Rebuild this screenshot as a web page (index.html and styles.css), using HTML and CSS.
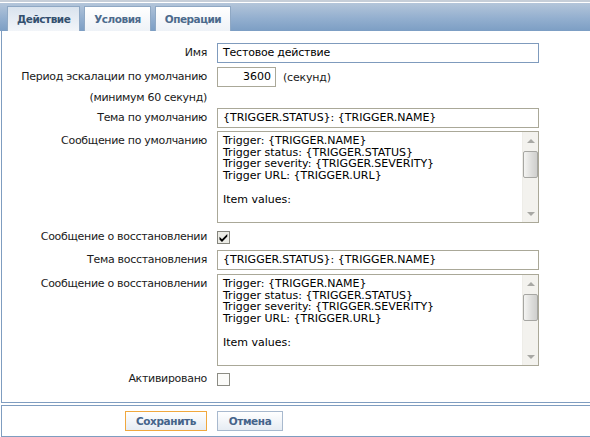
FILE: index.html
```html
<!DOCTYPE html>
<html>
<head>
<meta charset="utf-8">
<link rel="stylesheet" href="styles.css">
</head>
<body>
<div class="topline"></div>
<div class="tabbar">
  <div class="tab active">Действие</div>
  <div class="tab">Условия</div>
  <div class="tab">Операции</div>
</div>
<div class="panel">
  <div class="row r-name">
    <div class="lbl">Имя</div>
    <div class="field"><div class="input wide focus">Тестовое действие</div></div>
  </div>
  <div class="row r-period">
    <div class="lbl"><div>Период эскалации по умолчанию</div><div class="sub">(минимум 60 секунд)</div></div>
    <div class="field inline"><div class="input num">3600</div><span class="unit">(секунд)</span></div>
  </div>
  <div class="row r-subj">
    <div class="lbl">Тема по умолчанию</div>
    <div class="field"><div class="input wide">{TRIGGER.STATUS}: {TRIGGER.NAME}</div></div>
  </div>
  <div class="row r-msg">
    <div class="lbl">Сообщение по умолчанию</div>
    <div class="field">
      <div class="textarea">
        <div class="ta-text">Trigger: {TRIGGER.NAME}
Trigger status: {TRIGGER.STATUS}
Trigger severity: {TRIGGER.SEVERITY}
Trigger URL: {TRIGGER.URL}

Item values:</div>
        <div class="sb"><div class="sb-up"><span class="arr-up"></span></div><div class="sb-thumb"></div><div class="sb-fill"></div><div class="sb-down"><span class="arr-down"></span></div></div>
      </div>
    </div>
  </div>
  <div class="row r-check">
    <div class="lbl">Сообщение о восстановлении</div>
    <div class="field"><span class="check"><svg width="13" height="13" viewBox="0 0 13 13"><rect x="0.5" y="0.5" width="12" height="12" fill="#ecece6" stroke="#85857d"/><path d="M2.5 5.8 L5 8.3 L10.3 3 L10.3 5.6 L5 10.9 L2.5 8.4 Z" fill="#000"/></svg></span></div>
  </div>
  <div class="row r-rsubj">
    <div class="lbl">Тема восстановления</div>
    <div class="field"><div class="input wide">{TRIGGER.STATUS}: {TRIGGER.NAME}</div></div>
  </div>
  <div class="row r-rmsg">
    <div class="lbl">Сообщение о восстановлении</div>
    <div class="field">
      <div class="textarea">
        <div class="ta-text">Trigger: {TRIGGER.NAME}
Trigger status: {TRIGGER.STATUS}
Trigger severity: {TRIGGER.SEVERITY}
Trigger URL: {TRIGGER.URL}

Item values:</div>
        <div class="sb"><div class="sb-up"><span class="arr-up"></span></div><div class="sb-thumb"></div><div class="sb-fill"></div><div class="sb-down"><span class="arr-down"></span></div></div>
      </div>
    </div>
  </div>
  <div class="row r-active">
    <div class="lbl">Активировано</div>
    <div class="field"><span class="check"><svg width="13" height="13" viewBox="0 0 13 13"><rect x="0.5" y="0.5" width="12" height="12" fill="#fbfbf9" stroke="#8c8c84"/></svg></span></div>
  </div>
</div>
<div class="buttons">
  <div class="bcell left"><button class="btn primary">Сохранить</button></div>
  <div class="bcell"><button class="btn">Отмена</button></div>
</div>
</body>
</html>
```

FILE: styles.css
```css
* { box-sizing: border-box; }
html, body { margin: 0; padding: 0; background: #fff; }
body {
  font-family: "DejaVu Sans", Verdana, sans-serif;
  font-size: 11px;
  color: #1a1a1a;
  width: 590px;
  height: 437px;
  overflow: hidden;
}
.topline {
  height: 2px;
  background: #c6ced8;
  margin-bottom: 1px;
}
.tabbar {
  height: 28px;
  background: linear-gradient(#b4c6da, #93afcf 55%, #7c9ec4);
  display: flex;
  align-items: flex-end;
  gap: 4px;
  padding-left: 7px;
}
.tab {
  height: 25px;
  padding: 0 9px;
  border: 1px solid #8fa8c4;
  border-bottom: 0;
  background: linear-gradient(#ffffff, #eef2f7);
  font-weight: bold;
  color: #4c6a8c;
  line-height: 25px;
  font-size: 10.5px;
  letter-spacing: -0.5px;
}
.tab.active {
  background: linear-gradient(#d9e3ee, #f2f5f9);
  color: #34506f;
}
.panel {
  margin-left: 1px;
  border-left: 1px solid #7f9dc0;
  border-bottom: 1px solid #7f9dc0;
  padding-top: 12px;
  height: 372px;
}
.row {
  display: grid;
  grid-template-columns: 205px 1fr;
  column-gap: 10px;
  align-items: start;
}
.lbl {
  text-align: right;
  line-height: 20px;
  white-space: nowrap;
  letter-spacing: -0.3px;
}
.lbl .sub { line-height: 21px; }
.field { display: flex; align-items: center; }
.input {
  height: 20px;
  border: 1px solid #aaa898;
  background: #fff;
  line-height: 18px;
  padding: 0 5px;
  color: #000;
  white-space: nowrap;
}
.input.wide { width: 322px; }
.input.focus { border-color: #7f9bbd; letter-spacing: -0.2px; }
.input.num { width: 59px; text-align: right; padding-right: 4px; }
.field.inline { gap: 7px; height: 20px; }
.unit { color: #1a1a1a; letter-spacing: -0.2px; }
.r-period { margin-top: 4px; }
.r-subj { margin-top: 0; }
.r-msg { margin-top: 3px; }
.r-check { margin-top: 4px; height: 20px; }
.r-rsubj { margin-top: 3px; }
.r-rmsg { margin-top: 4px; }
.r-active { margin-top: 3px; height: 20px; }
.check { display: block; height: 13px; margin-top: 4px; }
.check svg { display: block; }
.textarea {
  width: 322px;
  height: 92px;
  border: 1px solid #aaa898;
  display: flex;
  background: #fff;
}
.ta-text {
  flex: 1;
  white-space: pre;
  padding: 3px 5px;
  line-height: 11.7px;
  color: #000;
  overflow: hidden;
}
.sb {
  width: 16px;
  background: #f3f2ee;
  border-left: 1px solid #eeede8;
  display: flex;
  flex-direction: column;
}
.sb-up, .sb-down {
  height: 17px;
  display: flex;
  align-items: center;
  justify-content: center;
}
.sb-fill { flex: 1; }
.sb-thumb {
  height: 27px;
  margin: 2px 0 0 0;
  border: 1px solid #a6a6a2;
  border-radius: 2px;
  background: linear-gradient(to right, #f4f4f2, #dcdcda 60%, #cfcfcd);
}
.arr-up, .arr-down {
  width: 0; height: 0;
  border-left: 4px solid transparent;
  border-right: 4px solid transparent;
}
.arr-up { border-bottom: 4px solid #a8a8a4; }
.arr-down { border-top: 4px solid #a8a8a4; }
.buttons {
  margin-top: 2px;
  margin-left: 1px;
  border-top: 1px solid #7f9dc0;
  border-bottom: 1px solid #7f9dc0;
  border-left: 1px solid #7f9dc0;
  height: 32px;
  padding-top: 5px;
  display: grid;
  grid-template-columns: 205px 1fr;
  column-gap: 10px;
}
.bcell.left { display: flex; justify-content: flex-end; }
.btn {
  height: 20px;
  font-family: "DejaVu Sans", Verdana, sans-serif;
  font-size: 10.5px;
  font-weight: bold;
  letter-spacing: -0.4px;
  color: #45648a;
  background: linear-gradient(#ffffff, #e6ecf3);
  border: 1px solid #a8b9ce;
  padding: 0 10px;
  margin: 0;
  line-height: 18px;
}
.btn.primary { border-color: #f0a83e; width: 82px; }
.btn:not(.primary) { width: 66px; }
```
